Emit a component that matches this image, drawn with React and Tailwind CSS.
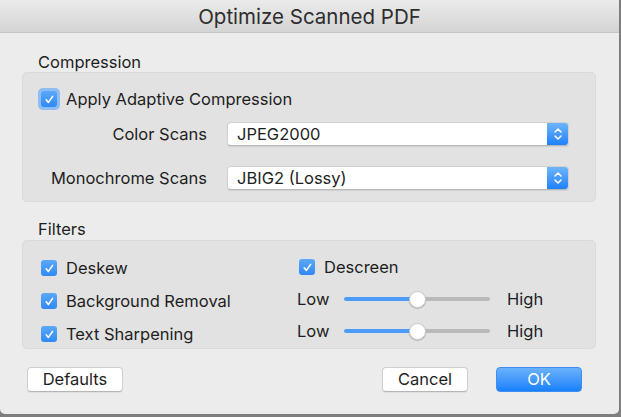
import React from "react";

const font = { fontFamily: "Inter, 'Noto Sans', sans-serif" };

function Check({ focus }) {
  const box = (
    <div className="w-[16px] h-[16px] rounded-[3px] bg-gradient-to-b from-[#5aa8f8] to-[#3089f3] flex items-center justify-center">
      <svg width="11" height="11" viewBox="0 0 11 11">
        <path d="M2.2 5.8 L4.4 8.4 L8.6 2.4" fill="none" stroke="white" strokeWidth="1.6" strokeLinecap="round" strokeLinejoin="round" />
      </svg>
    </div>
  );
  if (focus) {
    return (
      <div className="w-[22px] h-[22px] rounded-[5px] bg-[#8dbdf2] flex items-center justify-center">{box}</div>
    );
  }
  return box;
}

function Popup({ value }) {
  return (
    <div className="w-[342px] h-[24px] bg-white rounded-[4px] border border-[#d0d0d0] border-b-[#b8b8b8] shadow-[0_1px_1px_rgba(0,0,0,0.08)] flex items-center overflow-hidden">
      <div className="flex-1 pl-[9px] text-[16.5px] text-[#1e1e1e]">{value}</div>
      <div className="w-[21px] h-full bg-gradient-to-b from-[#6db4fb] to-[#1b80fb] flex items-center justify-center">
        <svg width="10" height="16" viewBox="0 0 10 16">
          <path d="M2 6 L5 3 L8 6" fill="none" stroke="white" strokeWidth="1.5" strokeLinecap="round" strokeLinejoin="round" />
          <path d="M2 10 L5 13 L8 10" fill="none" stroke="white" strokeWidth="1.5" strokeLinecap="round" strokeLinejoin="round" />
        </svg>
      </div>
    </div>
  );
}

function Slider() {
  return (
    <div className="flex items-center h-[22px]">
      <span className="w-[47px] text-[16.5px] text-[#1e1e1e]">Low</span>
      <div className="relative w-[146px] h-[17px] flex items-center">
        <div className="w-[73px] h-[4px] rounded-l-full bg-[#4a9cf6]" />
        <div className="flex-1 h-[4px] rounded-r-full bg-[#b9b9b9]" />
        <div className="absolute left-[65px] top-0 w-[17px] h-[17px] rounded-full bg-white border border-[#c8c8c8] shadow-[0_1px_1px_rgba(0,0,0,0.2)]" />
      </div>
      <span className="ml-[17px] text-[16.5px] text-[#1e1e1e]">High</span>
    </div>
  );
}

function Btn({ children, primary, w }) {
  if (primary) {
    return (
      <div className="w-[86px] h-[25px] rounded-[4px] bg-gradient-to-b from-[#69b1fb] to-[#1580fb] border border-[#3e8ef0] flex items-center justify-center text-white text-[16.5px]">
        {children}
      </div>
    );
  }
  return (
    <div className={`${w} h-[25px] rounded-[4px] bg-white border border-[#cfcfcf] border-b-[#b5b5b5] shadow-[0_1px_1px_rgba(0,0,0,0.06)] flex items-center justify-center text-[#1e1e1e] text-[16.5px]`}>
      {children}
    </div>
  );
}

export default function App() {
  return (
    <div className="w-[621px] h-[417px] bg-[#7e7e7e] overflow-hidden" style={font}>
      <div className="w-[619px] h-[414px] bg-[#ececec] rounded-b-[5px] flex flex-col">
        <div className="h-[33px] shrink-0 bg-gradient-to-b from-[#ebebeb] to-[#d4d4d4] border-b border-[#c4c4c4] flex items-center justify-center">
          <span className="text-[20.5px] text-[#2e2e2e] mt-[3px]">Optimize Scanned PDF</span>
        </div>
        <div className="pl-[22px] pr-[23px] pt-[19px] flex flex-col">
          <div className="h-[20px] leading-[20px] ml-[16px] text-[16.5px] text-[#1e1e1e]">Compression</div>
          <div className="h-[130px] rounded-[5px] bg-[#e2e2e2] border border-[#dadada] pt-[15px] flex flex-col">
            <div className="flex items-center h-[22px] ml-[15px]">
              <Check focus />
              <span className="ml-[6px] text-[16.5px] text-[#1e1e1e]">Apply Adaptive Compression</span>
            </div>
            <div className="flex items-center mt-[12px]">
              <div className="w-[184px] text-right text-[16.5px] text-[#1e1e1e]">Color Scans</div>
              <div className="ml-[20px]"><Popup value="JPEG2000" /></div>
            </div>
            <div className="flex items-center mt-[19px]">
              <div className="w-[184px] text-right text-[16.5px] text-[#1e1e1e]">Monochrome Scans</div>
              <div className="ml-[20px]"><Popup value="JBIG2 (Lossy)" /></div>
            </div>
          </div>
          <div className="h-[20px] leading-[20px] ml-[16px] mt-[17px] text-[16.5px] text-[#1e1e1e]">Filters</div>
          <div className="h-[109px] mt-[1px] rounded-[5px] bg-[#e2e2e2] border border-[#dadada] flex">
            <div className="w-[274px] pl-[18px] pt-[16px] flex flex-col gap-[11px]">
              {["Deskew", "Background Removal", "Text Sharpening"].map((t) => (
                <div key={t} className="flex items-center h-[22px]">
                  <Check />
                  <span className="ml-[9px] text-[16.5px] text-[#1e1e1e]">{t}</span>
                </div>
              ))}
            </div>
            <div className="pt-[15px] flex flex-col gap-[10px]">
              <div className="flex items-center h-[22px] ml-[2px]">
                <Check />
                <span className="ml-[9px] text-[16.5px] text-[#1e1e1e]">Descreen</span>
              </div>
              <Slider />
              <Slider />
            </div>
          </div>
          <div className="flex items-center mt-[18px] pl-[5px] pr-[14px]">
            <Btn w="w-[96px]">Defaults</Btn>
            <div className="flex-1" />
            <Btn w="w-[86px]">Cancel</Btn>
            <div className="w-[28px]" />
            <Btn primary>OK</Btn>
          </div>
        </div>
      </div>
    </div>
  );
}
